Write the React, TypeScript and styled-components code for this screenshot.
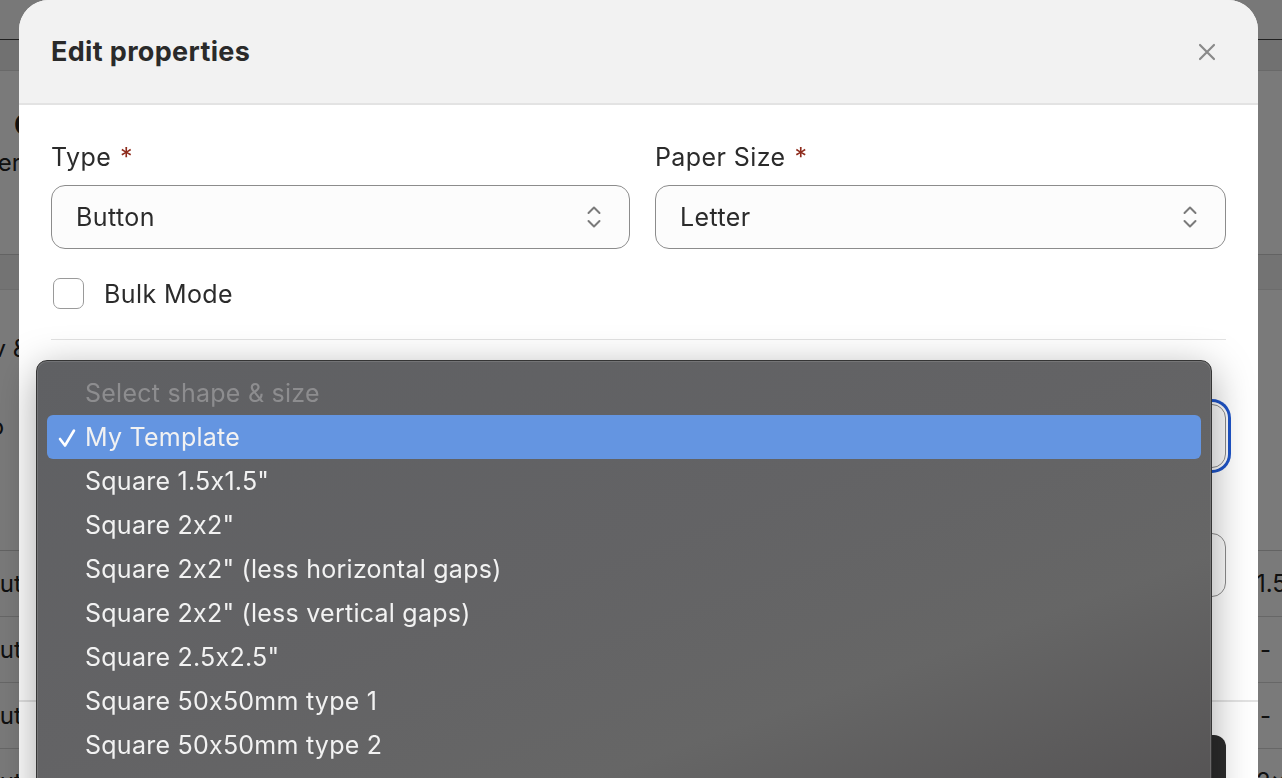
import React from 'react'
import styled, { createGlobalStyle } from 'styled-components'

const GlobalStyle = createGlobalStyle`
  html, body {
    margin: 0;
    padding: 0;
    height: 100%;
    overflow: hidden;
  }
  body {
    font-family: Inter, "Noto Sans", sans-serif;
    background: #ffffff;
    color: #222;
  }
  #root {
    height: 100%;
  }
`

// ---- page behind the modal ----
const Page = styled.div`
  height: 100%;
  display: flex;
  flex-direction: column;
  background: #fff;
  overflow: hidden;
`

const TopBar = styled.div`
  height: 39px;
  flex: none;
  border-bottom: 1px solid #444;
  background: #fbfbfb;
`

const SubBar = styled.div`
  height: 30px;
  flex: none;
  background: #ededed;
  border-bottom: 1px solid #dcdcdc;
`

const PageHead = styled.div`
  padding: 36px 0 0 14px;
  height: 184px;
  box-sizing: border-box;
  flex: none;
  border-bottom: 1px solid #cfcfcf;
`

const PageTitle = styled.div`
  font-size: 28px;
  font-weight: 700;
  line-height: 36px;
`

const PageText = styled.div<{ shift: number; gap?: number }>`
  font-size: 24px;
  line-height: 40px;
  margin-left: ${({ shift }) => shift}px;
  margin-top: ${({ gap }) => gap ?? 0}px;
  white-space: nowrap;
`

const SectionBar = styled.div`
  height: 34px;
  flex: none;
  background: #f1f1f1;
  border-bottom: 1px solid #e2e2e2;
`

const Section = styled.div`
  height: 261px;
  flex: none;
  padding-top: 39px;
  box-sizing: border-box;
  border-bottom: 1px solid #d0d0d0;
`

const TableRow = styled.div`
  height: 66px;
  flex: none;
  box-sizing: border-box;
  display: grid;
  grid-template-columns: 1256px 1fr;
  align-items: center;
  border-bottom: 1px solid #d8d8d8;
  font-size: 24px;
  white-space: nowrap;
  overflow: hidden;
`

const Cell = styled.span<{ shift?: number }>`
  margin-left: ${({ shift }) => shift ?? 0}px;
`

const Dim = styled.div`
  position: fixed;
  inset: 0;
  background: rgba(0, 0, 0, 0.52);
`

// ---- modal ----
const Modal = styled.div`
  position: fixed;
  top: 0;
  left: 19px;
  width: 1239px;
  height: 860px;
  background: #fff;
  border-radius: 30px 30px 0 0;
  overflow: hidden;
  display: flex;
  flex-direction: column;
`

const Header = styled.div`
  height: 103px;
  flex: none;
  display: flex;
  align-items: center;
  justify-content: space-between;
  padding: 0 42px 0 32px;
  background: #f2f2f2;
  border-bottom: 2px solid #e3e3e3;
`

const Title = styled.h2`
  margin: 0;
  font-size: 27px;
  font-weight: 700;
  color: #2a2a2a;
  letter-spacing: 0.35px;
`

const CloseButton = styled.button`
  border: 0;
  background: none;
  padding: 0;
  width: 18px;
  height: 18px;
  color: #8a8a8a;
  display: flex;
`

const Body = styled.div`
  padding: 35px 32px 0;
  display: flex;
  flex-direction: column;
`

const FieldGrid = styled.div`
  display: grid;
  grid-template-columns: 579px 1fr;
  column-gap: 25px;
`

const Field = styled.div<{ top?: number }>`
  display: flex;
  flex-direction: column;
  margin-top: ${({ top }) => top ?? 0}px;
`

const Label = styled.label`
  display: block;
  font-size: 25px;
  letter-spacing: 0.4px;
  line-height: 34px;
  height: 34px;
  color: #2b2b2b;
  margin-bottom: 11px;
`

const Required = styled.span`
  color: #8e2b1c;
  margin-left: 9px;
`

const SelectBox = styled.div<{ focused?: boolean }>`
  height: 64px;
  box-sizing: border-box;
  border: 1px solid #8c8c8c;
  border-radius: 14px;
  background: #fcfcfc;
  display: flex;
  align-items: center;
  justify-content: space-between;
  padding: 0 26px 0 24px;
  font-size: 25px;
  letter-spacing: 0.4px;
  color: #2b2b2b;
  box-shadow: ${({ focused }) => (focused ? '0 0 0 2px #fff, 0 0 0 5px #1f55c9' : 'none')};
`

const Chevrons = styled.svg`
  width: 18px;
  height: 28px;
  color: #7a7a7a;
`

const CheckRow = styled.label`
  display: flex;
  align-items: center;
  gap: 20px;
  margin-top: 29px;
  padding-left: 2px;
  font-size: 25px;
  letter-spacing: 0.4px;
  color: #2b2b2b;
`

const CheckBox = styled.span`
  width: 31px;
  height: 31px;
  box-sizing: border-box;
  border: 1.5px solid #9a9a9a;
  border-radius: 7px;
  background: #fff;
`

const Divider = styled.hr`
  border: 0;
  border-top: 1px solid #e2e2e2;
  margin: 30px 0 0;
`

const Footer = styled.div`
  margin-top: auto;
  height: 160px;
  flex: none;
  border-top: 2px solid #e3e3e3;
  display: flex;
  justify-content: flex-end;
  padding: 33px 32px 0;
  box-sizing: border-box;
`

const PrimaryButton = styled.button`
  width: 180px;
  height: 62px;
  border: 0;
  border-radius: 12px;
  background: #2c2c2c;
`

// ---- native select menu ----
const Menu = styled.ul`
  position: fixed;
  top: 360px;
  left: 36px;
  width: 1176px;
  height: 460px;
  box-sizing: border-box;
  margin: 0;
  padding: 10px 10px;
  list-style: none;
  border: 1px solid #353535;
  border-radius: 11px;
  background: linear-gradient(160deg, #5f6063 0%, #636365 45%, #666666 70%, #535152 100%);
  box-shadow: 0 10px 40px rgba(0, 0, 0, 0.35), inset 0 0 0 1px rgba(255, 255, 255, 0.12);
  font-family: Inter, "Noto Sans", sans-serif;
`

const MenuItem = styled.li<{ active?: boolean; disabled?: boolean }>`
  position: relative;
  height: 44px;
  display: flex;
  align-items: center;
  padding-left: 38px;
  border-radius: 6px;
  font-size: 25px;
  letter-spacing: 0.25px;
  color: ${({ disabled }) => (disabled ? '#8d8d8f' : '#f2f2f2')};
  background: ${({ active }) => (active ? '#6495e1' : 'transparent')};
`

const Tick = styled.svg`
  position: absolute;
  left: 11px;
  top: 13px;
  width: 18px;
  height: 20px;
  color: #fff;
`

const options = [
  'Square 1.5x1.5"',
  'Square 2x2"',
  'Square 2x2" (less horizontal gaps)',
  'Square 2x2" (less vertical gaps)',
  'Square 2.5x2.5"',
  'Square 50x50mm type 1',
  'Square 50x50mm type 2',
  'Square 60x60mm',
]

export default function App() {
  return (
    <>
      <GlobalStyle />
      <Page>
        <TopBar />
        <SubBar />
        <PageHead>
          <PageTitle>Create labels</PageTitle>
          <PageText shift={-58}>Order labels</PageText>
        </PageHead>
        <SectionBar />
        <Section>
          <PageText shift={-45}>Prev &amp; Next</PageText>
          <PageText shift={-53} gap={38}>Logo</PageText>
        </Section>
        <TableRow>
          <Cell shift={-16}>Button</Cell>
          <Cell>1.5x1.5"</Cell>
        </TableRow>
        <TableRow>
          <Cell shift={-16}>Button</Cell>
          <Cell shift={4}>-</Cell>
        </TableRow>
        <TableRow>
          <Cell shift={-16}>Button</Cell>
          <Cell shift={4}>-</Cell>
        </TableRow>
        <TableRow>
          <Cell shift={-16}>Button</Cell>
          <Cell>2x2"</Cell>
        </TableRow>
      </Page>
      <Dim />

      <Modal>
        <Header>
          <Title>Edit properties</Title>
          <CloseButton aria-label="Close">
            <svg viewBox="0 0 18 18" width="18" height="18" fill="none" stroke="currentColor" strokeWidth="2.2" strokeLinecap="round">
              <path d="M2 2 L16 16 M16 2 L2 16" />
            </svg>
          </CloseButton>
        </Header>
        <Body>
          <FieldGrid>
            <Field>
              <Label>
                Type<Required>*</Required>
              </Label>
              <SelectBox>
                Button
                <ChevronIcon />
              </SelectBox>
            </Field>
            <Field>
              <Label>
                Paper Size<Required>*</Required>
              </Label>
              <SelectBox>
                Letter
                <ChevronIcon />
              </SelectBox>
            </Field>
          </FieldGrid>
          <CheckRow>
            <CheckBox />
            Bulk Mode
          </CheckRow>
          <Divider />
          <Field top={19}>
            <Label>Template</Label>
            <SelectBox focused>
              My Template
              <ChevronIcon />
            </SelectBox>
          </Field>
          <Field top={20}>
            <Label>Name</Label>
            <SelectBox />
          </Field>
        </Body>
        <Footer>
          <PrimaryButton />
        </Footer>
      </Modal>

      <Menu role="listbox">
        <MenuItem disabled>Select shape &amp; size</MenuItem>
        <MenuItem active>
          <Tick viewBox="0 0 18 20" fill="none" stroke="currentColor" strokeWidth="2.6" strokeLinecap="round" strokeLinejoin="round">
            <path d="M2 11 L7 17.5 L16 2.5" />
          </Tick>
          My Template
        </MenuItem>
        {options.map((o) => (
          <MenuItem key={o}>{o}</MenuItem>
        ))}
      </Menu>
    </>
  )
}

function ChevronIcon() {
  return (
    <Chevrons viewBox="0 0 18 28" fill="none" stroke="currentColor" strokeWidth="2" strokeLinecap="round" strokeLinejoin="round">
      <path d="M3.5 10 L9 4.5 L14.5 10" />
      <path d="M3.5 18 L9 23.5 L14.5 18" />
    </Chevrons>
  )
}
